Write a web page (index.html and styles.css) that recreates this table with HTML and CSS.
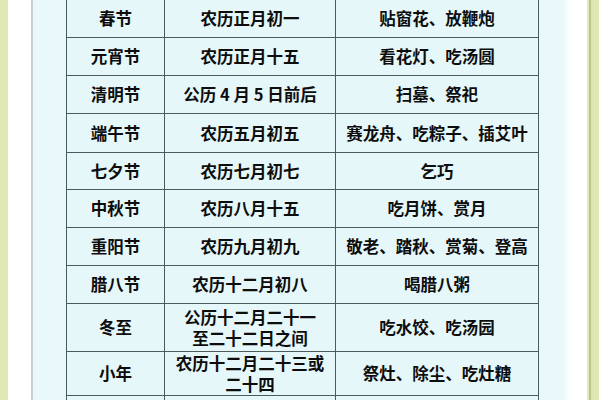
FILE: index.html
```html
<!DOCTYPE html>
<html lang="zh">
<head>
<meta charset="utf-8">
<link rel="stylesheet" href="styles.css">
</head>
<body>
<div class="page">
  <div class="edge-left"></div>
  <div class="gap-left"></div>
  <div class="panel">
    <div class="grid">
      <div class="c">春节</div><div class="c">农历正月初一</div><div class="c">贴窗花、放鞭炮</div>
      <div class="c">元宵节</div><div class="c">农历正月十五</div><div class="c">看花灯、吃汤圆</div>
      <div class="c">清明节</div><div class="c">公历 4 月 5 日前后</div><div class="c">扫墓、祭祀</div>
      <div class="c">端午节</div><div class="c">农历五月初五</div><div class="c">赛龙舟、吃粽子、插艾叶</div>
      <div class="c">七夕节</div><div class="c">农历七月初七</div><div class="c">乞巧</div>
      <div class="c">中秋节</div><div class="c">农历八月十五</div><div class="c">吃月饼、赏月</div>
      <div class="c">重阳节</div><div class="c">农历九月初九</div><div class="c">敬老、踏秋、赏菊、登高</div>
      <div class="c">腊八节</div><div class="c">农历十二月初八</div><div class="c">喝腊八粥</div>
      <div class="c">冬至</div><div class="c">公历十二月二十一<br>至二十二日之间</div><div class="c">吃水饺、吃汤园</div>
      <div class="c">小年</div><div class="c">农历十二月二十三或<br>二十四</div><div class="c">祭灶、除尘、吃灶糖</div>
      <div class="c">除夕</div><div class="c">农历腊月最后一天</div><div class="c top">贴春联、守岁、吃年夜饭<br>放鞭炮、拜年</div>
    </div>
  </div>
  <div class="gap-right"></div>
  <div class="edge-right"></div>
</div>
</body>
</html>
```

FILE: styles.css
```css
html, body {
  margin: 0;
  padding: 0;
  background: #ffffff;
}
.page {
  display: flex;
  width: 600px;
  height: 400px;
  overflow: hidden;
  font-family: "Noto Sans CJK SC", "Noto Sans", sans-serif;
}
.edge-left {
  width: 8px;
  flex: none;
  background: #dfe9b6;
}
.gap-left {
  width: 23px;
  flex: none;
  background: #ffffff;
}
.panel {
  width: 533px;
  flex: none;
  background: #e9f8fa;
  border-left: 2px solid #c9d0cf;
  box-sizing: border-box;
  padding-left: 33px;
}
.gap-right {
  width: 23px;
  flex: none;
  background: linear-gradient(to right, #f3fbfc, #ffffff 40%);
}
.edge-right {
  width: 12px;
  flex: none;
  background: linear-gradient(to right, #e3ebbe 0, #e3ebbe 2px, #bcc48c 2px, #bcc48c 4px, #dde7b2 4px);
}
.grid {
  display: grid;
  grid-template-columns: 98px 171px 203px;
  grid-template-rows: 38px 38px 38px 39px 37px 38px 38px 38px 48px 44px 64px;
  border-left: 1px solid #4f5a5b;
  width: 473px;
  box-sizing: border-box;
}
.c {
  display: flex;
  align-items: center;
  justify-content: center;
  text-align: center;
  border-right: 1px solid #4f5a5b;
  border-bottom: 1px solid #4f5a5b;
  box-sizing: border-box;
  background: #e6f7f9;
  color: #0d0d0d;
  font-weight: 700;
  font-size: 16.5px;
  line-height: 21px;
  white-space: nowrap;
}
.c.top {
  align-items: flex-start;
  padding-top: 2px;
}
```
